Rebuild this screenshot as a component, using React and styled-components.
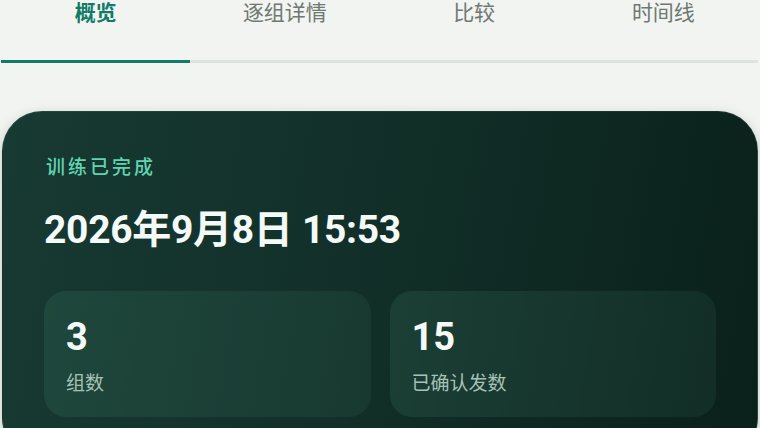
import React from "react";
import styled, { createGlobalStyle } from "styled-components";

const Global = createGlobalStyle`
  html, body { margin: 0; padding: 0; background: #f1f4f0; }
  body { font-family: Roboto, "Noto Sans CJK SC", sans-serif; overflow: hidden; }
`;

const Page = styled.div`
  width: 760px;
  height: 428px;
  overflow: hidden;
  display: flex;
  flex-direction: column;
`;

const TabBar = styled.div`
  display: grid;
  grid-template-columns: repeat(4, 1fr);
  padding: 0 2px 0 1px;
`;

const Tab = styled.div`
  display: flex;
  flex-direction: column;
  justify-content: space-between;
  align-items: center;
  height: 63px;
  font-size: 21px;
  line-height: 26px;
  color: ${(p) => (p.$active ? "#127a68" : "#6f7872")};
  font-weight: ${(p) => (p.$active ? 700 : 400)};
  &::after {
    content: "";
    align-self: stretch;
    height: 3px;
    background: ${(p) => (p.$active ? "#127a68" : "#dde3df")};
  }
`;

const Card = styled.div`
  margin: 48px 2px 0 2px;
  border-radius: 40px;
  background: linear-gradient(100deg, #173a32 0%, #123029 45%, #0a201b 100%);
  border: 1px solid rgba(255, 255, 255, 0.07);
  box-shadow: 0 4px 14px rgba(10, 40, 30, 0.18);
  padding: 43px 41px 40px 41px;
  flex: 1;
  display: flex;
  flex-direction: column;
`;

const Eyebrow = styled.div`
  font-size: 19px;
  line-height: 26px;
  letter-spacing: 3px;
  color: #5fd4b1;
  font-weight: 500;
  padding-left: 2px;
`;

const DateTitle = styled.div`
  margin-top: 26px;
  font-size: 39px;
  line-height: 46px;
  font-weight: 700;
  color: #f3faf7;
  letter-spacing: -0.3px;
`;

const Stats = styled.div`
  margin-top: 38px;
  display: grid;
  grid-template-columns: 1fr 1fr;
  gap: 19px;
`;

const Stat = styled.div`
  height: 126px;
  border-radius: 22px;
  background: linear-gradient(100deg, rgba(80, 150, 125, 0.16), rgba(80, 150, 125, 0.1));
  padding: 24px 22px 0 22px;
  box-sizing: border-box;
  display: flex;
  flex-direction: column;
`;

const StatValue = styled.div`
  font-size: 38px;
  line-height: 44px;
  font-weight: 700;
  color: #f3faf7;
`;

const StatLabel = styled.div`
  margin-top: 13px;
  font-size: 19px;
  line-height: 24px;
  color: #a6c2b6;
`;

const tabs = ["概览", "逐组详情", "比较", "时间线"];
const stats = [
  { value: "3", label: "组数" },
  { value: "15", label: "已确认发数" },
];

export default function App() {
  return (
    <Page>
      <Global />
      <TabBar>
        {tabs.map((t, i) => (
          <Tab key={t} $active={i === 0}>{t}</Tab>
        ))}
      </TabBar>
      <Card>
        <Eyebrow>训练已完成</Eyebrow>
        <DateTitle>2026年9月8日 15:53</DateTitle>
        <Stats>
          {stats.map((s) => (
            <Stat key={s.label}>
              <StatValue>{s.value}</StatValue>
              <StatLabel>{s.label}</StatLabel>
            </Stat>
          ))}
        </Stats>
      </Card>
    </Page>
  );
}
